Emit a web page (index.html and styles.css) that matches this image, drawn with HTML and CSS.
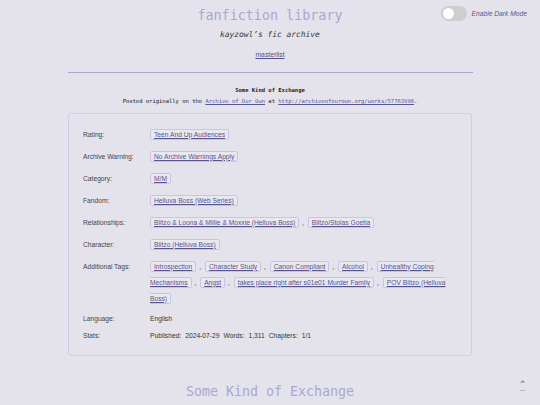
FILE: index.html
```html
<!DOCTYPE html>
<html lang="en">
<head>
<meta charset="utf-8">
<title>fanfiction library</title>
<link rel="stylesheet" href="styles.css">
</head>
<body>
<header class="site-header">
  <div class="top-row">
    <span class="spacer"></span>
    <h1 class="site-title">fanfiction library</h1>
    <label class="mode">
      <span class="switch"><span class="knob"></span></span>
      <span class="mode-text">Enable Dark Mode</span>
    </label>
  </div>
  <p class="tagline">kayzowl’s fic archive</p>
  <p class="nav"><a href="#">masterlist</a></p>
</header>
<hr class="rule">
<main class="work">
  <div class="work-head">
    <p class="work-title">Some Kind of Exchange</p>
    <p class="posted">Posted originally on the <a href="#">Archive of Our Own</a> at <a href="#">http://archiveofourown.org/works/57763996</a>.</p>
  </div>
  <dl class="meta">
    <div class="row"><dt>Rating:</dt><dd><a class="tag" href="#">Teen And Up Audiences</a></dd></div>
    <div class="row"><dt>Archive Warning:</dt><dd><a class="tag" href="#">No Archive Warnings Apply</a></dd></div>
    <div class="row"><dt>Category:</dt><dd><a class="tag" href="#">M/M</a></dd></div>
    <div class="row"><dt>Fandom:</dt><dd><a class="tag" href="#">Helluva Boss (Web Series)</a></dd></div>
    <div class="row"><dt>Relationships:</dt><dd><span class="item"><a class="tag" href="#">Blitzo &amp; Loona &amp; Millie &amp; Moxxie (Helluva Boss)</a> ,</span> <span class="item"><a class="tag" href="#">Blitzo/Stolas Goetia</a></span></dd></div>
    <div class="row"><dt>Character:</dt><dd><a class="tag" href="#">Blitzo (Helluva Boss)</a></dd></div>
    <div class="row"><dt>Additional Tags:</dt><dd><span class="item"><a class="tag" href="#">Introspection</a> ,</span> <span class="item"><a class="tag" href="#">Character Study</a> ,</span> <span class="item"><a class="tag" href="#">Canon Compliant</a> ,</span> <span class="item"><a class="tag" href="#">Alcohol</a> ,</span> <span class="item"><a class="tag" href="#">Unhealthy Coping Mechanisms</a> ,</span> <span class="item"><a class="tag" href="#">Angst</a> ,</span> <span class="item"><a class="tag" href="#">takes place right after s01e01 Murder Family</a> ,</span> <span class="item"><a class="tag" href="#">POV Blitzo (Helluva Boss)</a></span></dd></div>
    <div class="row plain"><dt>Language:</dt><dd>English</dd></div>
    <div class="row plain"><dt>Stats:</dt><dd><span class="stat">Published:</span><span class="stat">2024-07-29</span><span class="stat">Words:</span><span class="stat">1,311</span><span class="stat">Chapters:</span><span class="stat">1/1</span></dd></div>
  </dl>
  <h2 class="chapter-title">Some Kind of Exchange</h2>
</main>
<a class="to-top" href="#">^</a>
</body>
</html>
```
FILE: styles.css
```css
html, body {
  margin: 0;
  padding: 0;
}
body {
  background: #e4e3eb;
  font-family: "Liberation Sans", Arial, sans-serif;
  color: #444;
  min-height: 405px;
}
p, h1, h2, dl, dd, dt {
  margin: 0;
}
.site-header {
  padding-top: 8px;
}
.top-row {
  display: grid;
  grid-template-columns: 1fr auto 1fr;
  align-items: start;
}
.site-title {
  font-family: "DejaVu Sans Mono", monospace;
  font-weight: normal;
  font-size: 13.4px;
  line-height: 16px;
  color: #aaa7cf;
  text-align: center;
}
.mode {
  justify-self: end;
  display: flex;
  align-items: center;
  gap: 5px;
  margin-right: 13px;
  margin-top: -2px;
}
.switch {
  display: flex;
  align-items: center;
  width: 26px;
  height: 15px;
  box-sizing: border-box;
  padding: 0 2px;
  border-radius: 8px;
  background: #cdcdd2;
}
.knob {
  width: 11px;
  height: 11px;
  border-radius: 50%;
  background: #fff;
}
.mode-text {
  font-size: 6.7px;
  font-style: italic;
  color: #5a5590;
}
.tagline {
  margin-top: 6px;
  font-family: "DejaVu Sans Mono", monospace;
  font-style: italic;
  font-size: 7.9px;
  line-height: 10px;
  color: #333;
  text-align: center;
}
.nav {
  margin-top: 9.5px;
  font-size: 6.8px;
  line-height: 9px;
  text-align: center;
}
.nav a {
  color: #55518b;
}
.rule {
  width: 405px;
  margin: 13px auto 0;
  border: 0;
  border-top: 1px solid #aba7d1;
  height: 0;
}
.work {
  width: 404px;
  margin: 0 auto;
}
.work-head {
  margin-top: 14px;
  text-align: center;
  font-family: "DejaVu Sans Mono", monospace;
  font-size: 5.5px;
  line-height: 7px;
  color: #222;
}
.work-title {
  font-weight: bold;
}
.posted {
  margin-top: 4.5px;
}
.posted a {
  color: #5a5696;
}
.meta {
  margin-top: 7.5px;
  border: 1px solid #d0cceb;
  border-radius: 3px;
  padding: 13px 14px;
  display: flex;
  flex-direction: column;
  gap: 6px;
  font-size: 6.7px;
  line-height: 16px;
}
.row {
  display: grid;
  grid-template-columns: 67px 1fr;
}
.row.plain {
  line-height: 11.5px;
}
dt {
  color: #444;
}
dd {
  color: #333;
}
.tag {
  color: #57538c;
  background: #e9e8f1;
  border: 1px solid #c8c4e6;
  border-radius: 2px;
  padding: 1px 3px;
}
.item {
  margin-right: 2px;
}
.item .tag {
  margin-right: 1px;
}
.stat {
  margin-right: 4px;
}
.chapter-title {
  margin-top: 28px;
  font-family: "DejaVu Sans Mono", monospace;
  font-weight: normal;
  font-size: 13.3px;
  line-height: 16px;
  color: #aaa7cf;
  text-align: center;
}
.to-top {
  position: fixed;
  right: 15px;
  bottom: 14px;
  font-family: "DejaVu Sans Mono", monospace;
  font-size: 8px;
  line-height: 8px;
  color: #5a5590;
  text-decoration: none;
  border-bottom: 1px solid #b3b0d2;
  padding-bottom: 1px;
}
```
